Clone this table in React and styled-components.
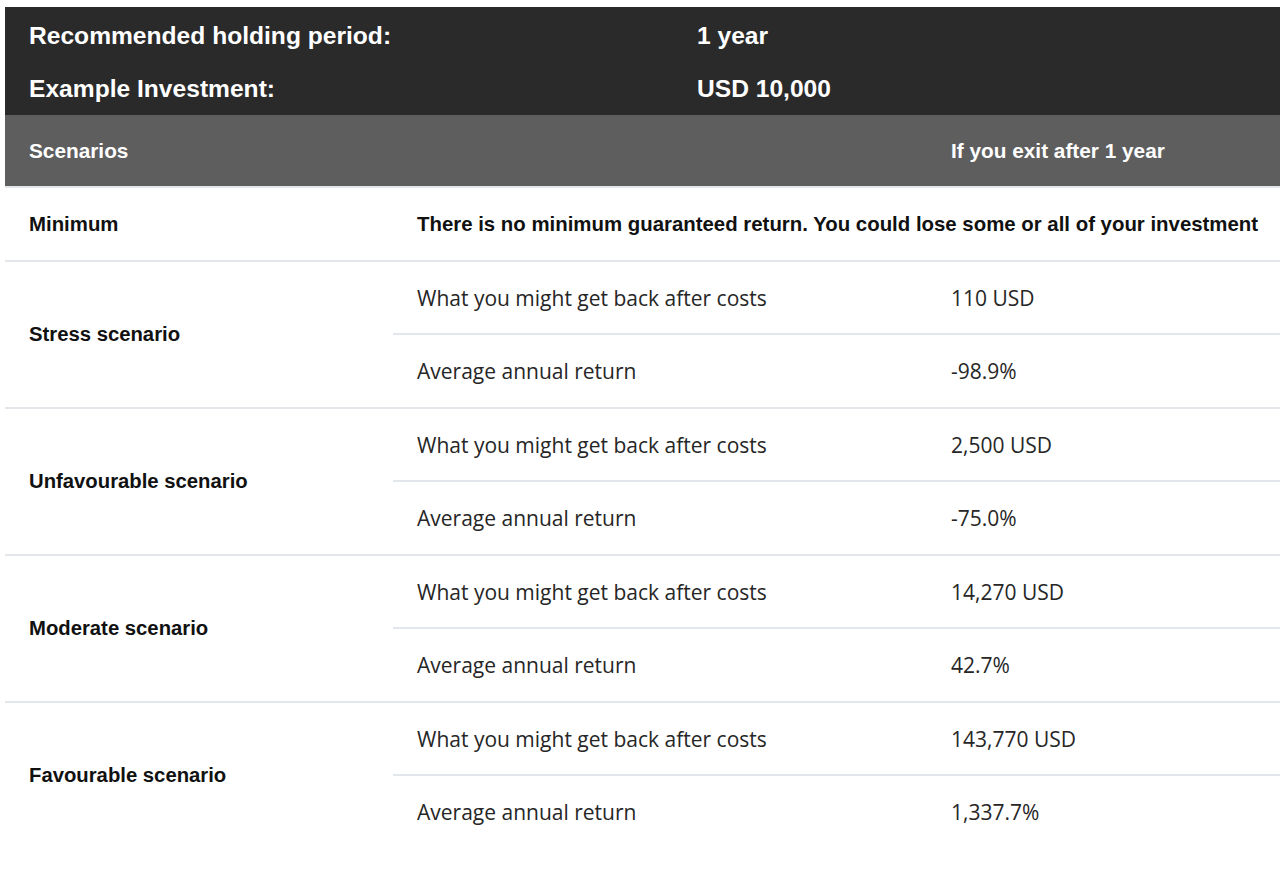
import React from "react";
import styled, { createGlobalStyle } from "styled-components";

const Global = createGlobalStyle`
  html, body { margin: 0; padding: 0; background: #ffffff; }
  body { font-family: "Liberation Sans", Arial, sans-serif; }
`;

const Page = styled.div`
  padding: 7px 0 0 5px;
`;

const Table = styled.div`
  width: 1275px;
`;

const Summary = styled.div`
  background: #2a2a2a;
  color: #ffffff;
  padding-top: 2px;
  display: grid;
  grid-template-columns: 668px 1fr;
  grid-auto-rows: 53px;
  align-items: center;
  font-family: "Liberation Sans", Arial, sans-serif;
  font-weight: 700;
  font-size: 24.6px;
`;

const SummaryCell = styled.div`
  padding-left: 24px;
`;

const Grid = styled.div`
  display: grid;
  grid-template-columns: 388px 534px 1fr;
`;

const HeadRow = styled(Grid)`
  background: #5e5e5e;
  height: 71px;
  align-items: center;
  color: #ffffff;
  font-weight: 700;
  font-size: 20.8px;
  border-bottom: 2px solid #e3e7eb;
`;

const HeadCell = styled.div`
  padding-left: 24px;
  grid-column: ${(p) => p.$col || "auto"};
`;

const MinRow = styled(Grid)`
  height: 72px;
  align-items: center;
  border-bottom: 2px solid #e3e7eb;
  font-weight: 700;
  font-size: 20.4px;
  color: #111111;
`;

const MinMessage = styled.div`
  grid-column: 2 / 4;
  padding-left: 24px;
  white-space: nowrap;
`;

const Block = styled(Grid)`
  border-bottom: ${(p) => (p.$last ? "none" : "2px solid #e3e7eb")};
`;

const Label = styled.div`
  grid-row: 1 / 3;
  display: flex;
  align-items: center;
  padding-left: 24px;
  font-weight: 700;
  font-size: 20.3px;
  color: #111111;
`;

const SubRow = styled.div`
  grid-column: 2 / 4;
  display: grid;
  grid-template-columns: 534px 1fr;
  align-items: center;
  height: ${(p) => (p.$first ? "71px" : "72px")};
  border-bottom: ${(p) => (p.$first ? "2px solid #e3e7eb" : "none")};
  font-family: "Open Sans", "Noto Sans", sans-serif;
  font-size: 21px;
  color: #262626;
`;

const SubCell = styled.div`
  padding-left: 24px;
  white-space: nowrap;
`;

const scenarios = [
  { name: "Stress scenario", amount: "110 USD", pct: "-98.9%" },
  { name: "Unfavourable scenario", amount: "2,500 USD", pct: "-75.0%" },
  { name: "Moderate scenario", amount: "14,270 USD", pct: "42.7%" },
  { name: "Favourable scenario", amount: "143,770 USD", pct: "1,337.7%" },
];

export default function App() {
  return (
    <>
      <Global />
      <Page>
        <Table>
          <Summary>
            <SummaryCell>Recommended holding period:</SummaryCell>
            <SummaryCell>1 year</SummaryCell>
            <SummaryCell>Example Investment:</SummaryCell>
            <SummaryCell>USD 10,000</SummaryCell>
          </Summary>
          <HeadRow>
            <HeadCell>Scenarios</HeadCell>
            <HeadCell $col="3">If you exit after 1 year</HeadCell>
          </HeadRow>
          <MinRow>
            <HeadCell>Minimum</HeadCell>
            <MinMessage>
              There is no minimum guaranteed return. You could lose some or all of your investment
            </MinMessage>
          </MinRow>
          {scenarios.map((s, i) => (
            <Block key={s.name} $last={i === scenarios.length - 1}>
              <Label>{s.name}</Label>
              <SubRow $first>
                <SubCell>What you might get back after costs</SubCell>
                <SubCell>{s.amount}</SubCell>
              </SubRow>
              <SubRow>
                <SubCell>Average annual return</SubCell>
                <SubCell>{s.pct}</SubCell>
              </SubRow>
            </Block>
          ))}
        </Table>
      </Page>
    </>
  );
}
